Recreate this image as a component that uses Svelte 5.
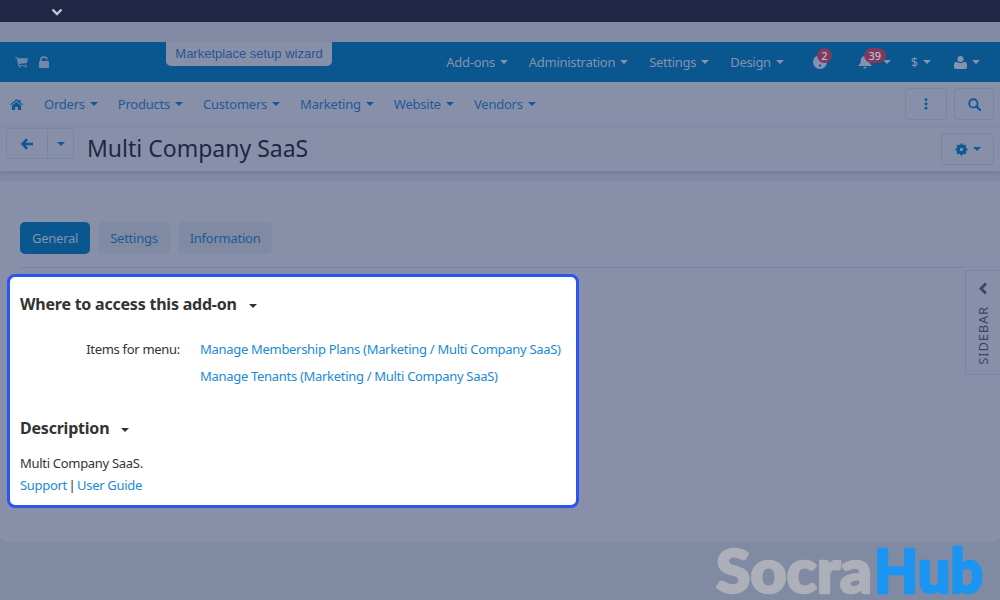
<script>
  const topMenu = ['Add-ons', 'Administration', 'Settings', 'Design'];
  const mainMenu = ['Orders', 'Products', 'Customers', 'Marketing', 'Website', 'Vendors'];
  const tabs = ['General', 'Settings', 'Information'];
</script>

<div class="page">
  <div class="topbar">
    <svg class="chev" viewBox="0 0 12 8" width="12" height="8"><path d="M1.5 1.5 6 6l4.5-4.5" fill="none" stroke="#c3c7d3" stroke-width="2.4"/></svg>
  </div>
  <div class="gap"></div>

  <header class="blue">
    <div class="blue-left">
      <svg viewBox="0 0 14 12" width="13" height="12"><path d="M0 .5h2.500l.4 1.500H14l-1.200 5.200-8.400.9.200 1h8v1H3.500L1.700 1.500H0z" fill="#6f85a9"/><circle cx="5" cy="11" r="1" fill="#6f85a9"/><circle cx="11.500" cy="11" r="1" fill="#6f85a9"/></svg>
      <svg viewBox="0 0 10 12" width="10" height="12"><rect x="0" y="5" width="10" height="7" rx="1" fill="#7588a9"/><path d="M1.800 5.500V3.600a3.100 2.600 0 0 1 6.200 0" fill="none" stroke="#7588a9" stroke-width="1.500"/></svg>
    </div>
    <div class="wizard">Marketplace setup wizard</div>
    <nav class="blue-right">
      {#each topMenu as item}
        <span class="top-item">{item}<i class="caret"></i></span>
      {/each}
      <span class="ic help">
        <svg viewBox="0 0 14 14" width="14" height="14"><circle cx="7" cy="7" r="7" fill="#8592b1"/><rect x="6" y="9.500" width="2" height="2" fill="#0a568f"/></svg>
        <b class="badge">2</b>
      </span>
      <span class="ic bell">
        <svg viewBox="0 0 14 14" width="14" height="14"><path d="M7 0a1 1 0 0 1 1 1c2.400.5 3.200 2.500 3.200 4.500 0 2.500 1 3.500 2.800 5.500H0c1.800-2 2.800-3 2.800-5.500C2.800 3.500 3.600 1.500 6 1a1 1 0 0 1 1-1zM5.500 12h3A1.500 1.500 0 0 1 5.500 12z" fill="#8592b1"/></svg>
        <b class="badge wide">39</b>
        <i class="caret bell-caret"></i>
      </span>
      <span class="top-item dollar">$<i class="caret"></i></span>
      <span class="ic user">
        <svg viewBox="0 0 13 13" width="13" height="13"><circle cx="6.500" cy="3" r="3" fill="#8592b1"/><path d="M0 11V8.500C0 7 1 6 2.600 5.800c1 .9 2.500 1.300 3.900 1.300s2.900-.4 3.900-1.300C12 6 13 7 13 8.500V11c0 1.300-.8 2-2 2H2c-1.200 0-2-.7-2-2z" fill="#8592b1"/></svg>
        <i class="caret"></i>
      </span>
    </nav>
  </header>

  <div class="mainnav">
    <svg class="home" viewBox="0 0 14 12" width="13" height="11"><path d="M7 0l2.600 2.200V1h1.800v2.700L14 6l-.8.900L7 1.800.8 6.900 0 6zM2 7.200 7 3l5 4.200V12H8.500V8.500h-3V12H2z" fill="#0a5a98"/></svg>
    {#each mainMenu as item}
      <span class="main-item">{item}<i class="caret blue-caret"></i></span>
    {/each}
    <div class="main-actions">
      <button class="sq dots" aria-label="More"><svg viewBox="0 0 4 14" width="4" height="12"><circle cx="2" cy="2" r="1.700" /><circle cx="2" cy="7" r="1.700" /><circle cx="2" cy="12" r="1.700" /></svg></button>
      <button class="sq search" aria-label="Search"><svg viewBox="0 0 14 14" width="13" height="13"><circle cx="5.800" cy="5.800" r="4.500" fill="none" stroke="#0a5a98" stroke-width="2"/><path d="M9 9l4 4" stroke="#0a5a98" stroke-width="2.400" stroke-linecap="round"/></svg></button>
    </div>
  </div>

  <div class="titlebar">
    <div class="back-group">
      <button class="back" aria-label="Back"><svg viewBox="0 0 12 12" width="12" height="12"><path d="M6 1.200 1.500 6 6 10.800M2 6h10" fill="none" stroke="#0a5a98" stroke-width="2.600"/></svg></button>
      <button class="back-caret" aria-label="History"><i class="caret blue-caret"></i></button>
    </div>
    <h1>Multi Company SaaS</h1>
    <button class="gear" aria-label="Options">
      <svg viewBox="0 0 14 14" width="13" height="13"><circle cx="7" cy="7" r="3.800" fill="none" stroke="#0a5a98" stroke-width="3"/><path d="M7 .5v13M.5 7h13M2.400 2.400l9.200 9.200M11.600 2.400l-9.200 9.200" stroke="#0a5a98" stroke-width="2.200"/><circle cx="7" cy="7" r="1.800" fill="#888fa9"/></svg>
      <i class="caret blue-caret"></i>
    </button>
  </div>
  <div class="strip"></div>

  <main class="content">
    <div class="tabs">
      {#each tabs as tab, i}
        <span class="tab" class:active={i === 0}>{tab}</span>
      {/each}
    </div>

    <section class="card">
      <h2>Where to access this add-on<i class="caret dark"></i></h2>
      <div class="row">
        <span class="label">Items for menu:</span>
        <div class="links">
          <a href="#a">Manage Membership Plans (Marketing / Multi Company SaaS)</a>
          <a href="#b">Manage Tenants (Marketing / Multi Company SaaS)</a>
        </div>
      </div>
      <h2 class="desc">Description<i class="caret dark"></i></h2>
      <p>Multi Company SaaS.</p>
      <p class="support"><a href="#c">Support</a> | <a href="#d">User Guide</a></p>
    </section>

    <div class="sidebar">
      <svg viewBox="0 0 10 13" width="10" height="13"><path d="M8 1.500 3 6.500l5 5" fill="none" stroke="#3d4560" stroke-width="2.800"/></svg>
      <span>SIDEBAR</span>
    </div>
  </main>

  <footer class="foot">
    <svg class="logo" viewBox="0 0 300 57" width="300" height="57">
      <text x="16" y="50.500" class="socra" textLength="156" lengthAdjust="spacingAndGlyphs">Socra</text>
      <text x="174" y="50.500" class="hub" textLength="109" lengthAdjust="spacingAndGlyphs">Hub</text>
    </svg>
  </footer>
</div>

<style>
  :global(body) { margin: 0; background: #808aa2; }
  .page {
    width: 1000px; height: 600px; overflow: hidden; position: relative;
    display: flex; flex-direction: column;
    font-family: "Noto Sans", sans-serif; font-size: 13px; letter-spacing: -0.3px; background: #808aa2;
  }
  .topbar { height: 22px; background: #1f2745; flex: none; position: relative; }
  .chev { position: absolute; left: 51px; top: 8px; }
  .gap { height: 20px; flex: none; background: #828aa3; }

  .blue { height: 40px; flex: none; background: #0a568f; display: flex; align-items: center; position: relative; padding: 0 20px 0 15px; }
  .blue-left { display: flex; gap: 11px; align-items: center; }
  .wizard {
    position: absolute; left: 166px; top: 0; height: 24px; width: 166px; box-sizing: border-box;
    background: #888fa9; border-radius: 0 0 5px 5px; color: #27578f; text-align: center; line-height: 23px;
    font-family: "Liberation Sans", sans-serif; font-size: 13px; letter-spacing: 0;
  }
  .blue-right { margin-left: auto; display: flex; align-items: center; color: #8592b1; }
  .top-item { margin-left: 21px; display: inline-flex; align-items: center; }
  .top-item:first-child { margin-left: 0; }
  .caret { display: inline-block; width: 0; height: 0; margin-left: 5px; border: 4px solid transparent; border-top-color: #8592b1; border-bottom: 0; }
  .ic { position: relative; display: inline-flex; align-items: center; }
  .help { margin-left: 29px; }
  .bell { margin-left: 31px; }
  .bell-caret { margin-left: 11px; }
  .dollar { margin-left: 20px; }
  .user { margin-left: 23px; }
  .badge { position: absolute; height: 15px; line-height: 15px; background: #803a5e; color: #b9bcca; font-size: 11px; font-weight: 500; text-align: center; border-radius: 8px; left: 4px; top: -7px; width: 15px; letter-spacing: 0; }
  .badge.wide { width: 22px; left: 6px; }

  .mainnav { height: 45px; flex: none; background: #888fa9; border-bottom: 1px solid #838ba6; display: flex; align-items: center; padding: 0 6px 0 10px; box-sizing: border-box; letter-spacing: -0.23px; }
  .home { margin-right: 1px; }
  .main-item { color: #1f5a97; margin-left: 20px; display: inline-flex; align-items: center; }
  .blue-caret { border-top-color: #0a5a98; }
  .main-actions { margin-left: auto; display: flex; gap: 7px; }
  button { background: transparent; border: 1px solid #7985a3; border-radius: 4px; padding: 0; display: inline-flex; align-items: center; justify-content: center; box-sizing: border-box; font: inherit; }
  .sq { height: 32px; }
  .dots { width: 42px; fill: #0a5a98; }
  .search { width: 40px; }

  .titlebar { height: 44px; flex: none; background: #888fa9; display: flex; align-items: flex-start; padding: 1px 6px 0; box-sizing: border-box; box-shadow: 0 2px 4px #737b96; position: relative; }
  .back-group { display: flex; }
  .back { width: 42px; height: 31px; border-radius: 4px 0 0 4px; }
  .back-caret { width: 26px; height: 31px; border-left: 0; border-radius: 0 4px 4px 0; }
  .back-caret .caret { margin: 0; }
  h1 { margin: 2px 0 0 13px; font-size: 23px; font-weight: 400; letter-spacing: 0; color: #1f2745; line-height: 36px; white-space: nowrap; }
  .gear { margin-left: auto; margin-top: 5px; width: 53px; height: 32px; }

  .strip { height: 10px; flex: none; background: #828aa4; }

  .content { height: 361px; flex: none; background: #888fa9; border-radius: 0 0 5px 5px; position: relative; box-sizing: border-box; padding: 41px 8px 0; box-shadow: 0 1px 2px #79829c; }
  .tabs { display: flex; gap: 8px; margin: 0 26px 13px 12px; padding-bottom: 13px; border-bottom: 1px solid #7b84a0; letter-spacing: -0.25px; }
  .tab { height: 32px; line-height: 32px; padding: 0 12px; background: #808aa2; color: #1f5a97; border-radius: 5px; }
  .tab.active { background: #0a568f; color: #8592b1; }

  .card { width: 572px; height: 234px; box-sizing: border-box; background: #fff; border: 3px solid #2b54f0; border-radius: 8px; padding: 0 10px; color: #333; margin: -7px 0 0 -1px; }
  h2 { margin: 15px 0 0; font-size: 16px; line-height: 24px; font-weight: 700; letter-spacing: -0.22px; color: #333; }
  .caret.dark { border-top-color: #333; margin-left: 12px; vertical-align: 2px; }
  .row { display: flex; margin-top: 24px; }
  .label { width: 180px; text-align: right; padding-right: 20px; box-sizing: border-box; line-height: 18px; flex: none; }
  .links { display: flex; flex-direction: column; gap: 9px; }
  a { color: #1a8ad8; text-decoration: none; line-height: 18px; word-spacing: 0; }
  .desc { margin-top: 31px; }
  p { margin: 0; line-height: 22px; }
  .desc + p { margin-top: 12px; }
  .support { word-spacing: -1.5px; }

  .sidebar { position: absolute; right: 0; top: 89px; width: 35px; height: 105px; box-sizing: border-box; border: 1px solid #7b84a0; border-right: 0; border-radius: 3px 0 0 3px; background: #888fa9; display: flex; flex-direction: column; align-items: center; padding-top: 11px; gap: 11px; color: #3d4560; }
  .sidebar span { writing-mode: vertical-rl; transform: rotate(180deg); font-size: 13px; letter-spacing: .8px; }

  .foot { flex: 1; position: relative; background: #808aa2; }
  .logo { position: absolute; left: 700px; top: 0; }
  .socra, .hub { font-family: "Lato", sans-serif; font-weight: 900; font-size: 60px; letter-spacing: 0; stroke-width: 2.500; stroke-linejoin: round; paint-order: stroke; }
  .socra { fill: #adafb9; stroke: #adafb9; }
  .hub { fill: #1b95f2; stroke: #1b95f2; }
</style>
